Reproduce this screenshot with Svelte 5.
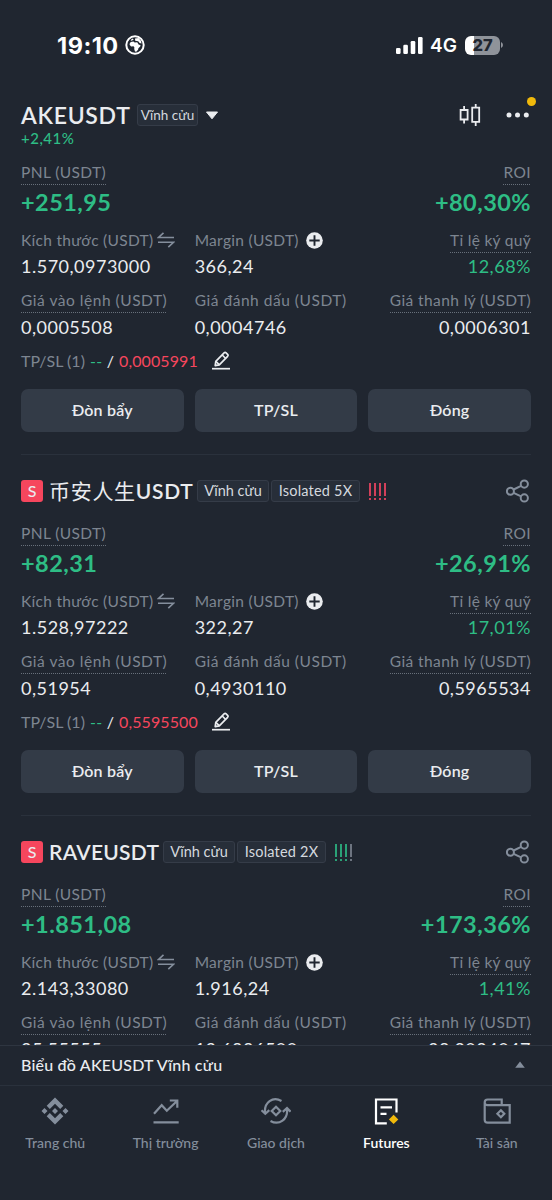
<script>
  const positions = [
    {
      pnl: '+251,95',
      roi: '+80,30%',
      size: '1.570,0973000',
      margin: '366,24',
      ratio: '12,68%',
      entry: '0,0005508',
      mark: '0,0004746',
      liq: '0,0006301',
      sl: '0,0005991'
    },
    {
      name: '币安人生',
      quote: 'USDT',
      leverage: 'Isolated 5X',
      risk: ['red', 'red', 'red', 'red'],
      pnl: '+82,31',
      roi: '+26,91%',
      size: '1.528,97222',
      margin: '322,27',
      ratio: '17,01%',
      entry: '0,51954',
      mark: '0,4930110',
      liq: '0,5965534',
      sl: '0,5595500'
    },
    {
      quote: 'RAVEUSDT',
      leverage: 'Isolated 2X',
      risk: ['green', 'green', 'green', 'gray'],
      pnl: '+1.851,08',
      roi: '+173,36%',
      size: '2.143,33080',
      margin: '1.916,24',
      ratio: '1,41%',
      entry: '25,55555',
      mark: '13,6886500',
      liq: '38,2084047',
      sl: '38,0000000'
    }
  ];

  const tabs = [
    { id: 'home', label: 'Trang chủ' },
    { id: 'market', label: 'Thị trường' },
    { id: 'trade', label: 'Giao dịch' },
    { id: 'futures', label: 'Futures' },
    { id: 'wallet', label: 'Tài sản' }
  ];

  let active = $state('futures');
</script>

<div class="screen">
  <div class="status">
    <div class="clock">
      <span>19:10</span>
      <svg width="20" height="20" viewBox="0 0 20 20">
        <circle cx="10" cy="10" r="8.7" fill="none" stroke="#fff" stroke-width="2" />
        <path
          d="M4.800 8.300 5.800 7l2.600-.4 1.300.8 2.500-.2 1.600 2.600 1.700.2-.3 1.500-1.800 1.700-.3 1.600-1.900 2-1.200-.2-.8-2.600.2-1.500-.9-1.300-2.400.2-1.500-1.600z"
          fill="#fff"
        />
        <path d="M5.500 5.300 7.500 3.500l1.200 1.100-2 1.200zM10 3.400l3.600-.3 2.300 2.700.6 2.700-1.900-.4-1.400-1.800-3-.5z" fill="#fff" />
      </svg>
    </div>
    <div class="signal">
      <svg width="27" height="17" viewBox="0 0 27 17" fill="#fff">
        <rect x="0" y="11" width="4.600" height="6" rx="1.300" />
        <rect x="7.300" y="7.800" width="4.600" height="9.200" rx="1.300" />
        <rect x="14.700" y="4" width="4.600" height="13" rx="1.300" />
        <rect x="22" y="0" width="4.600" height="17" rx="1.300" />
      </svg>
      <span class="net">4G</span>
      <div class="battery"><span>27</span></div>
      <svg class="cap" width="2" height="6" viewBox="0 0 2 6"><path d="M0 0q2 1 2 3t-2 3z" fill="#8f939a" /></svg>
    </div>
  </div>

  <header>
    <div class="pair">
      <h1>AKEUSDT</h1>
      <span class="tag small">Vĩnh cửu</span>
      <svg class="caret" width="14" height="9" viewBox="0 0 14 9"><path d="M1.500 1h11L7 7.800z" fill="#eaecef" stroke="#eaecef" stroke-linejoin="round" /></svg>
      <svg class="candles" width="22" height="24" viewBox="0 0 22 24" fill="none" stroke="#eaecef" stroke-width="1.800">
        <path d="M1.600 7h7v9.500h-7zM5.100 7V3M5.100 16.500v4M13.200 4.700h7v14.200h-7zM16.700 4.700V1M16.700 18.900v4" />
      </svg>
      <div class="more">
        <svg width="24" height="6" viewBox="0 0 24 6" fill="#eaecef">
          <circle cx="3" cy="3" r="2.500" />
          <circle cx="11.500" cy="3" r="2.500" />
          <circle cx="20.300" cy="3" r="2.500" />
        </svg>
        <i></i>
      </div>
    </div>
    <div class="change">+2,41%</div>
  </header>

  <main>
    {#each positions as p}
      <section>
        {#if p.quote}
          <div class="title">
            <b class="side">S</b>
            <h2 class:cjk={p.name}>{#if p.name}<span>{p.name}</span>{/if}{p.quote}</h2>
            <span class="tag">Vĩnh cửu</span>
            <span class="tag wide">{p.leverage}</span>
            <div class="risk">
              {#each p.risk as level}
                <i class={level}></i>
              {/each}
            </div>
            <svg class="share" width="24" height="24" viewBox="0 0 24 24" fill="none" stroke="#848e9c" stroke-width="2">
              <circle cx="4.400" cy="12.200" r="3.500" />
              <circle cx="18.300" cy="5.100" r="3.600" />
              <circle cx="18.300" cy="18.900" r="3.600" />
              <path d="m7.600 10.500 7.500-3.700M7.600 13.900l7.500 3.500" />
            </svg>
          </div>
        {/if}

        <div class="row">
          <div>
            <div class="label"><span class="dotted">PNL (USDT)</span></div>
            <div class="big">{p.pnl}</div>
          </div>
          <div class="end">
            <div class="label"><span class="dotted">ROI</span></div>
            <div class="big">{p.roi}</div>
          </div>
        </div>

        <div class="grid">
          <div>
            <div class="label">
              <span>Kích thước (USDT)</span>
              <svg class="swap" width="18" height="16" viewBox="0 0 18 16" fill="none" stroke="#848e9c" stroke-width="1.600">
                <path d="M17 5.500H1.500L6.500.800M1 10.300h15.500l-5.200 4.800" />
              </svg>
            </div>
            <div class="value">{p.size}</div>
          </div>
          <div>
            <div class="label">
              <span>Margin (USDT)</span>
              <svg class="plus" width="17" height="17" viewBox="0 0 17 17">
                <circle cx="8.500" cy="8.500" r="8.300" fill="#eaecef" />
                <path d="M8.500 3.300v10.400M3.300 8.500h10.400" stroke="#202630" stroke-width="1.900" />
              </svg>
            </div>
            <div class="value">{p.margin}</div>
          </div>
          <div class="end">
            <div class="label"><span class="dotted">Tỉ lệ ký quỹ</span></div>
            <div class="value up">{p.ratio}</div>
          </div>
        </div>

        <div class="grid prices">
          <div>
            <div class="label"><span class="dotted">Giá vào lệnh (USDT)</span></div>
            <div class="value">{p.entry}</div>
          </div>
          <div>
            <div class="label"><span>Giá đánh dấu (USDT)</span></div>
            <div class="value">{p.mark}</div>
          </div>
          <div class="end">
            <div class="label"><span class="dotted liq">Giá thanh lý (USDT)</span></div>
            <div class="value">{p.liq}</div>
          </div>
        </div>

        <div class="tpsl">
          <span>TP/SL (1)</span>
          <span class="dash">--</span>
          <span class="slash">/</span>
          <span class="down">{p.sl}</span>
          <svg width="18" height="19" viewBox="0 0 18 19" fill="none" stroke="#eaecef" stroke-width="1.700">
            <path d="m3.200 14.600.6-4.200 8.300-8.600q1-.9 2 0l1.500 1.500q.9 1 0 2l-8.300 8.500z" stroke-linejoin="round" />
            <path d="m10.200 4 3.500 3.500M3.800 10.400l3.400 3.300" />
            <path d="M0 17.700h18" />
          </svg>
        </div>

        <div class="grid actions">
          <button>Đòn bẩy</button>
          <button>TP/SL</button>
          <button>Đóng</button>
        </div>
      </section>
    {/each}
  </main>

  <div class="chart">
    <span>Biểu đồ AKEUSDT Vĩnh cửu</span>
    <svg width="10" height="7" viewBox="0 0 10 7"><path d="M5 .4 9.800 6.700H.2z" fill="#848e9c" /></svg>
  </div>

  <nav>
    {#each tabs as tab}
      <button class:active={active === tab.id} onclick={() => (active = tab.id)}>
        <svg width="30" height="28" viewBox="0 0 30 28" fill="none" stroke="currentColor" stroke-width="2.200">
          {#if tab.id === 'home'}
            <g fill="currentColor" stroke="none">
              <path d="m15 .6 8.300 8.200-3.100 3.100L15 6.700l-5.200 5.200-3.100-3.100zM15 27.400l8.300-8.200-3.100-3.100-5.200 5.200-5.200-5.200-3.100 3.100zM15 11l3 3-3 3-3-3zM4.500 11l3 3-3 3-3-3zM25.500 11l3 3-3 3-3-3z" />
            </g>
          {:else if tab.id === 'market'}
            <path d="m3 16.700 7.700-8.500 5.100 5.500L26 4M18.800 3.500h7.500v7.300M2.500 25.300h25.200" />
          {:else if tab.id === 'trade'}
            <path d="M20.500 4C11.700-.9 3 5.500 4 16M.5 13.200l3.800 3.600 4-3.700M9.500 24C18.300 28.900 27.200 22 26 12M29.600 14.700 26 11.100l-4.200 3.700" />
            <path d="m15 9.700 4.300 4.300-4.300 4.300-4.300-4.300z" />
          {:else if tab.id === 'futures'}
            <path d="M15.800 26.300H5V2.500h20.500v13M9.500 10.300h11.500M9.500 16.800h6" />
            <path d="m22.600 17.800 4.700 4.600-4.700 4.700-4.700-4.700z" fill="#f0b90b" stroke="none" />
          {:else}
            <path d="M2.700 8V5.500q0-3 3-3h14v5.200M2.700 5.500q0 2.700 3 2.700h22v17.500h-22q-3 0-3-3z" />
            <path d="m18.900 13.300 3.400 3.500-3.400 3.500-3.500-3.500z" />
          {/if}
        </svg>
        <span>{tab.label}</span>
      </button>
    {/each}
  </nav>
</div>

<style>
  :global(body) {
    background: #202630;
  }
  .screen {
    width: 552px;
    height: 1200px;
    display: flex;
    flex-direction: column;
    overflow: hidden;
    background: #202630;
    color: #eaecef;
    font-family: Lato, 'Noto Sans', 'Noto Sans CJK SC', sans-serif;
    white-space: nowrap;
  }
  svg {
    display: block;
    flex: none;
  }
  h1,
  h2 {
    margin: 0;
    font-weight: 600;
  }
  button {
    border: 0;
    padding: 0;
    font: inherit;
    color: inherit;
    background: none;
  }
  .status {
    height: 90px;
    flex: none;
    box-sizing: border-box;
    padding: 0 49px 0 57px;
    display: flex;
    justify-content: space-between;
    align-items: center;
    color: #fff;
    font-family: Inter, sans-serif;
  }
  .clock {
    display: flex;
    align-items: center;
    gap: 6px;
    font-size: 23.500px;
    font-weight: 700;
    letter-spacing: 0.500px;
  }
  .signal {
    display: flex;
    align-items: center;
  }
  .net {
    margin: 0 8px 0 7px;
    font-size: 19px;
    font-weight: 600;
  }
  .battery {
    width: 35px;
    height: 19px;
    border-radius: 6px;
    background: linear-gradient(90deg, #fff 27%, #8f939a 27%);
    color: #202630;
    font-size: 16.500px;
    font-weight: 800;
    line-height: 19px;
    text-align: center;
  }
  .cap {
    margin-left: 1px;
  }
  header {
    height: 72px;
    flex: none;
    box-sizing: border-box;
    padding: 12px 15px 0 21px;
  }
  .pair {
    height: 26px;
    display: flex;
    align-items: center;
  }
  h1 {
    width: 116px;
    font-size: 23px;
    letter-spacing: 0.700px;
  }
  .tag {
    box-sizing: border-box;
    width: 72px;
    height: 22px;
    margin-right: 2px;
    border: 1px solid #353c48;
    border-radius: 3px;
    background: #272e39;
    color: #d5d9df;
    font-size: 14.500px;
    line-height: 20px;
    text-align: center;
  }
  .tag.small {
    width: 61px;
    font-size: 13.500px;
    margin: 0;
  }
  .tag.wide {
    width: 89px;
    letter-spacing: 0.200px;
  }
  .caret {
    margin-left: 7px;
  }
  .candles {
    margin-left: auto;
  }
  .more {
    position: relative;
    margin-left: 25px;
    padding-right: 7px;
  }
  .more i {
    position: absolute;
    top: -15px;
    right: 1px;
    width: 9px;
    height: 9px;
    border-radius: 50%;
    background: #f0b90b;
  }
  .change {
    margin-top: -1px;
    font-size: 15px;
    font-weight: 500;
    line-height: 22px;
    letter-spacing: 0.500px;
    color: #2ebd85;
  }
  main {
    flex: 1;
    min-height: 0;
    overflow: hidden;
  }
  section {
    padding: 0 21px 23px;
    background: linear-gradient(#2a313c, #2a313c) 21px 100% / 510px 1px no-repeat;
  }
  section + section {
    padding-top: 24px;
  }
  .title {
    height: 24px;
    margin-bottom: 20px;
    display: flex;
    align-items: center;
  }
  .side {
    width: 22px;
    height: 22px;
    margin-right: 6px;
    border-radius: 3px;
    background: #f6465d;
    font-size: 16px;
    font-weight: 500;
    line-height: 21px;
    text-align: center;
  }
  h2 {
    width: 114px;
    font-size: 21px;
    line-height: 24px;
    letter-spacing: 0.300px;
  }
  h2.cjk {
    width: 148px;
    letter-spacing: 0.700px;
  }
  h2 span {
    font-weight: 400;
  }
  .risk {
    display: flex;
    gap: 3px;
    margin-left: 7px;
  }
  .risk i {
    width: 2px;
    height: 17px;
    background: linear-gradient(currentColor 13px, transparent 13px 15px, currentColor 15px);
  }
  .red {
    color: #d2405a;
  }
  .green {
    color: #2aa277;
  }
  .gray {
    color: #6d7480;
  }
  .share {
    margin-left: auto;
    margin-right: 1px;
  }
  .row {
    display: flex;
    justify-content: space-between;
  }
  .label {
    height: 23px;
    display: flex;
    font-size: 15.500px;
    line-height: 20px;
    letter-spacing: 0.300px;
    color: #7d8590;
  }
  .label span {
    box-sizing: border-box;
    height: 23px;
  }
  .dotted {
    background: repeating-linear-gradient(90deg, #68707b 0 1px, transparent 1px 2px) 0 100% / 100% 1px no-repeat;
  }
  .row .dotted {
    letter-spacing: 0.400px;
  }
  .end {
    text-align: right;
  }
  .end .label {
    justify-content: flex-end;
  }
  .big {
    height: 34px;
    font-size: 23.500px;
    font-weight: 700;
    line-height: 34px;
    letter-spacing: 0.450px;
    color: #2ebd85;
  }
  .grid {
    display: grid;
    grid-template-columns: repeat(3, 1fr);
    gap: 11px;
    margin-top: 11px;
  }
  .prices {
    margin-top: 9px;
  }
  .prices .label {
    letter-spacing: 0.530px;
  }
  .label .liq {
    letter-spacing: 0.400px;
  }
  .value {
    height: 28px;
    font-size: 18px;
    line-height: 26px;
    letter-spacing: 0.500px;
  }
  .prices .value {
    line-height: 28px;
  }
  .up {
    color: #2ebd85;
  }
  .swap {
    margin: 2px 0 0 4px;
  }
  .plus {
    margin: 2px 0 0 7px;
  }
  .tpsl {
    height: 22px;
    margin-top: 8px;
    padding-bottom: 2px;
    display: flex;
    align-items: center;
    gap: 5px;
    font-size: 16px;
    color: #7d8590;
  }
  .dash {
    color: #2ebd85;
    letter-spacing: 0.500px;
  }
  .slash {
    color: #eaecef;
    margin-left: -1px;
  }
  .down {
    color: #f6465d;
    letter-spacing: 0.100px;
  }
  .tpsl svg {
    margin-left: 9px;
  }
  .actions {
    margin-top: 16px;
  }
  .actions button {
    height: 43px;
    padding-bottom: 2px;
    border-radius: 7px;
    background: #333b47;
    font-size: 16px;
    font-weight: 600;
    letter-spacing: 0.200px;
  }
  .chart {
    height: 41px;
    flex: none;
    box-sizing: border-box;
    padding: 0 27px 2px 21px;
    display: flex;
    align-items: center;
    justify-content: space-between;
    border-top: 1px solid #2e3540;
    border-bottom: 1px solid #2a313c;
    font-size: 16px;
    font-weight: 500;
    letter-spacing: 0.200px;
  }
  nav {
    height: 114px;
    flex: none;
    display: grid;
    grid-template-columns: repeat(5, 1fr);
    align-items: start;
  }
  nav button {
    padding-top: 11px;
    display: flex;
    flex-direction: column;
    align-items: center;
    gap: 8px;
    font-size: 14px;
    font-weight: 500;
    line-height: 20px;
    color: #848e9c;
  }
  nav .active {
    color: #fff;
    font-weight: 600;
  }
</style>
